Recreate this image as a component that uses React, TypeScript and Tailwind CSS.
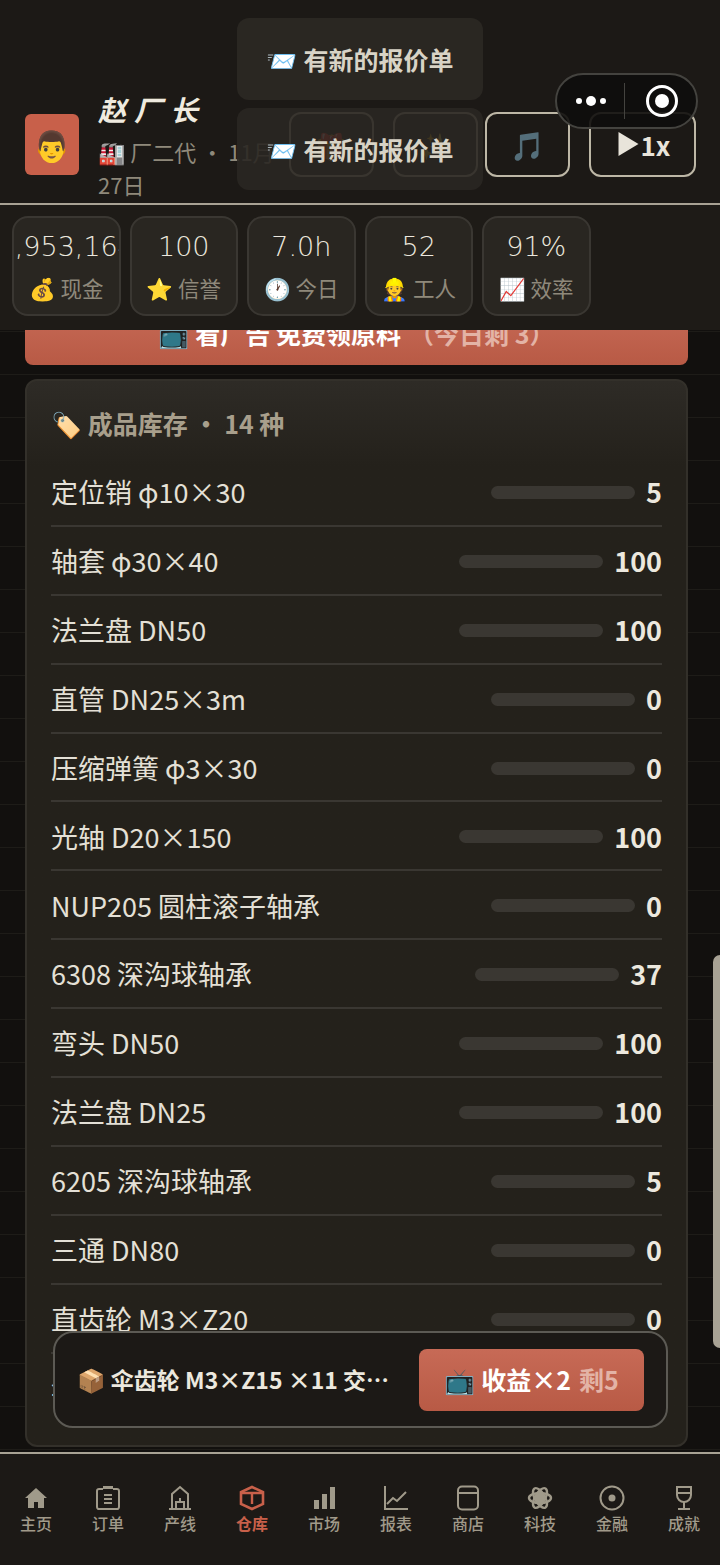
import type { ReactNode } from "react";

const CJK = "font-['Noto_Sans_CJK_SC','Noto_Color_Emoji',sans-serif]";

const stats = [
  { value: "5,953,164", icon: "💰", label: "现金" },
  { value: "100", icon: "⭐", label: "信誉" },
  { value: "7.0h", icon: "🕐", label: "今日" },
  { value: "52", icon: "👷", label: "工人" },
  { value: "91%", icon: "📈", label: "效率" },
];

const products = [
  { name: "定位销 φ10×30", qty: 5 },
  { name: "轴套 φ30×40", qty: 100 },
  { name: "法兰盘 DN50", qty: 100 },
  { name: "直管 DN25×3m", qty: 0 },
  { name: "压缩弹簧 φ3×30", qty: 0 },
  { name: "光轴 D20×150", qty: 100 },
  { name: "NUP205 圆柱滚子轴承", qty: 0 },
  { name: "6308 深沟球轴承", qty: 37 },
  { name: "弯头 DN50", qty: 100 },
  { name: "法兰盘 DN25", qty: 100 },
  { name: "6205 深沟球轴承", qty: 5 },
  { name: "三通 DN80", qty: 0 },
  { name: "直齿轮 M3×Z20", qty: 0 },
  { name: "伞齿轮 M3×Z15", qty: 11 },
];

function Icon({ children }: { children: ReactNode }) {
  return (
    <svg viewBox="0 0 26 26" className="h-[26px] w-[26px]" fill="none" stroke="currentColor" strokeWidth="2">
      {children}
    </svg>
  );
}

const tabs: { label: string; active?: boolean; icon: ReactNode }[] = [
  {
    label: "主页",
    icon: <path d="M13 3 2 13h3v10h6v-6h4v6h6V13h3z" fill="currentColor" stroke="none" />,
  },
  {
    label: "订单",
    icon: (
      <>
        <path d="M8 4H4.500A2 2 0 0 0 2 6v16a2 2 0 0 0 2.500 2h17a2 2 0 0 0 2.500-2V6a2 2 0 0 0-2.500-2H18" />
        <path d="M8 2.500h10" strokeWidth="3" />
        <path d="M9 10h8M9 14h8M9 18h8" />
      </>
    ),
  },
  {
    label: "产线",
    icon: (
      <>
        <path d="M5 23V9l8-7 8 7v14" />
        <path d="M2 24h22" />
        <path d="M9 23v-6h8v6M13 17v-4" />
      </>
    ),
  },
  {
    label: "仓库",
    active: true,
    icon: (
      <>
        <path d="M13 2 24 7v12l-11 5L2 19V7z" strokeWidth="2.600" />
        <path d="M2 8h22M13 8v11" strokeWidth="2.400" />
      </>
    ),
  },
  {
    label: "市场",
    icon: (
      <>
        <rect x="3" y="15" width="5" height="9" fill="currentColor" stroke="none" />
        <rect x="11" y="9" width="5" height="15" fill="currentColor" stroke="none" />
        <rect x="19" y="2" width="5" height="22" fill="currentColor" stroke="none" />
      </>
    ),
  },
  {
    label: "报表",
    icon: (
      <>
        <path d="M2 1v23h23" />
        <path d="M4 19l6-6 4 3 9-9" />
      </>
    ),
  },
  {
    label: "商店",
    icon: (
      <>
        <rect x="3" y="1.500" width="20" height="23" rx="4" />
        <path d="M3 8h20" />
      </>
    ),
  },
  {
    label: "科技",
    icon: (
      <>
        <ellipse cx="13" cy="13" rx="11" ry="5" strokeWidth="2.400" />
        <ellipse cx="13" cy="13" rx="11" ry="5" strokeWidth="2.400" transform="rotate(60 13 13)" />
        <ellipse cx="13" cy="13" rx="11" ry="5" strokeWidth="2.400" transform="rotate(120 13 13)" />
        <circle cx="13" cy="13" r="5" fill="currentColor" stroke="none" />
      </>
    ),
  },
  {
    label: "金融",
    icon: (
      <>
        <circle cx="13" cy="13" r="11.500" />
        <circle cx="13" cy="13" r="3.500" fill="currentColor" stroke="none" />
      </>
    ),
  },
  {
    label: "成就",
    icon: (
      <>
        <path d="M6 2h14v8a7 7 0 0 1-14 0z" />
        <path d="M6 8h14M13 17v6M7 24h12" />
      </>
    ),
  },
];

export default function App() {
  return (
    <div className={`relative flex h-[1565px] w-[720px] flex-col overflow-hidden bg-[#12100e] ${CJK} text-[#e8e4da]`}>
      {/* header */}
      <header className="z-10 flex h-[205px] shrink-0 items-center border-b-2 border-[#a8a294] bg-[#1c1916] pl-[25px] pr-[24px] pt-[85px]">
        <div className="flex h-[61px] w-[54px] shrink-0 items-center justify-center rounded-md bg-[#c8604a] text-[30px]">👨</div>
        <div className="ml-[19px] w-[191px] shrink-0">
          <div className="mt-[2px] text-[28px] font-bold italic leading-[40px] tracking-[8px] text-[#efeadf]">赵厂长</div>
          <div className="mt-[6px] pr-[12px] text-[22px] leading-[33px] text-[#8f897b]">🏭 厂二代 · 11月27日</div>
        </div>
        <div className="flex gap-[7px]">
          <div className="flex gap-[19px]">
            <div className="flex h-[65px] w-[85px] items-center justify-center rounded-xl border-2 border-[#bdb7a6] text-[26px]">🎁</div>
            <div className="flex h-[65px] w-[85px] items-center justify-center rounded-xl border-2 border-[#bdb7a6] text-[26px]">✨</div>
          </div>
          <div className="flex gap-[19px]">
            <div className="flex h-[65px] w-[85px] items-center justify-center rounded-xl border-2 border-[#bdb7a6] text-[28px]">🎵</div>
            <div className="flex h-[65px] w-[107px] items-center justify-center gap-[2px] rounded-xl border-2 border-[#bdb7a6] pl-[3px] text-[26px] font-bold text-[#e8e4da]">
              <svg viewBox="0 0 20 24" className="h-[24px] w-[21px]" fill="currentColor">
                <path d="M0 0 20 12 0 24z" />
              </svg>
              1x
            </div>
          </div>
        </div>
      </header>

      {/* stats */}
      <section className="z-10 flex h-[125px] shrink-0 gap-[9px] bg-[#1e1b17] pl-[12px] pt-[11px]">
        {stats.map((s) => (
          <div
            key={s.label}
            className="flex h-[100px] w-[108.500px] flex-col items-center overflow-hidden rounded-2xl border-2 border-[#3a3732] bg-[#292621]"
          >
            <div className="mt-[9px] flex w-full justify-center overflow-hidden whitespace-nowrap font-['DejaVu_Sans',sans-serif] text-[27px] font-extralight leading-[40px] text-[#ece8de]">
              <span className="shrink-0">{s.value}</span>
            </div>
            <div className="mt-[6px] whitespace-nowrap text-[21.500px] leading-[30px] text-[#8f897b]">
              {s.icon} {s.label}
            </div>
          </div>
        ))}
      </section>

      {/* scrolled content */}
      <main className="min-h-0 flex-1 overflow-hidden bg-[linear-gradient(#1e1c18_1px,transparent_1px)] bg-[size:100%_43px] bg-[position:0_1px] pl-[25px] pr-[32px]">
        <button className="-mt-[23px] flex h-[58px] w-full items-center justify-center rounded-lg bg-gradient-to-b from-[#c76a56] to-[#b85a45] pb-[4px] text-[25px] font-bold text-white">
          📺 看广告 免费领原料 <span className="ml-[8px] text-[#e3b3a6]">（今日剩 3）</span>
        </button>

        <div className="mt-[14px] rounded-xl border-2 border-[#33302a] bg-gradient-to-b from-[#2e2b26] from-0% to-[#24211b] to-[8%] px-[24px] pb-[23px]">
          <div className="flex h-[77px] items-center pt-[8px] text-[25px] font-bold text-[#a89f8c]">🏷️ 成品库存 · 14 种</div>
          {products.map((p) => (
            <div key={p.name} className="flex h-[68.900px] items-center justify-between border-b-2 border-[#3a3732] pt-[2px] last:border-b-0">
              <span className="text-[27px] text-[#e4e0d6]">{p.name}</span>
              <div className="flex items-center gap-[11px]">
                <div className="h-[13px] w-[144px] rounded-full bg-[#3a3732]" />
                <span className="text-[27px] font-bold text-[#ece8de]">{p.qty}</span>
              </div>
            </div>
          ))}
        </div>
      </main>

      {/* bottom nav */}
      <nav className="z-10 flex h-[113px] shrink-0 border-t-2 border-[#a8a294] bg-[#1c1916]">
        {tabs.map((t) => (
          <div
            key={t.label}
            className={`flex w-[72px] flex-col items-center pt-[31px] text-[16px] leading-[22px] ${
              t.active ? "font-bold text-[#c8604a]" : "font-medium text-[#a09a8a]"
            }`}
          >
            <Icon>{t.icon}</Icon>
            <span className="mt-[1px]">{t.label}</span>
          </div>
        ))}
      </nav>

      {/* delivery task bar */}
      <div className="absolute left-[53px] top-[1331px] z-20 flex h-[97px] w-[615px] items-center justify-between rounded-[20px] border-2 border-[#5c5a54] bg-[#1c1916] pl-[22px] pr-[22px]">
        <span className="w-[322px] truncate text-[23px] font-bold text-[#ece8de]">📦 伞齿轮 M3×Z15 ×11 交付订单</span>
        <button className="flex h-[62px] w-[225px] items-center justify-center rounded-lg bg-gradient-to-b from-[#c76a56] to-[#b85a45] text-[25px] font-bold text-white">
          📺 收益×2 <span className="ml-[8px] text-[#e3b3a6]">剩5</span>
        </button>
      </div>

      {/* toasts */}
      <div className="absolute left-[237px] top-[18px] z-30 flex w-[246px] flex-col gap-[8px]">
        <div className="flex h-[82px] items-center justify-center rounded-xl bg-[#2a2722] pt-[2px] text-[25px] font-bold text-[#d8d3c6]">📨 有新的报价单</div>
        <div className="flex h-[82px] items-center justify-center rounded-xl bg-[#2a2722]/90 pt-[2px] text-[25px] font-bold text-[#d8d3c6]">📨 有新的报价单</div>
      </div>

      {/* mini program capsule */}
      <div className="absolute left-[555px] top-[73px] z-40 flex h-[56px] w-[143px] items-center rounded-full border-2 border-[#44433f] bg-[#0e0d0c]/90">
        <div className="flex w-[67px] items-center justify-center gap-[4px]">
          <span className="h-[6px] w-[6px] rounded-full bg-white" />
          <span className="h-[10px] w-[10px] rounded-full bg-white" />
          <span className="h-[6px] w-[6px] rounded-full bg-white" />
        </div>
        <div className="h-[36px] w-px bg-[#44433f]" />
        <div className="flex flex-1 items-center justify-center pl-[2px]">
          <div className="flex h-[32px] w-[32px] items-center justify-center rounded-full border-[3px] border-white">
            <span className="h-[14px] w-[14px] rounded-full bg-white" />
          </div>
        </div>
      </div>

      {/* scrollbar */}
      <div className="absolute left-[713px] top-[955px] z-10 h-[393px] w-[7px] rounded-l-full bg-[#a8a294]" />
    </div>
  );
}
